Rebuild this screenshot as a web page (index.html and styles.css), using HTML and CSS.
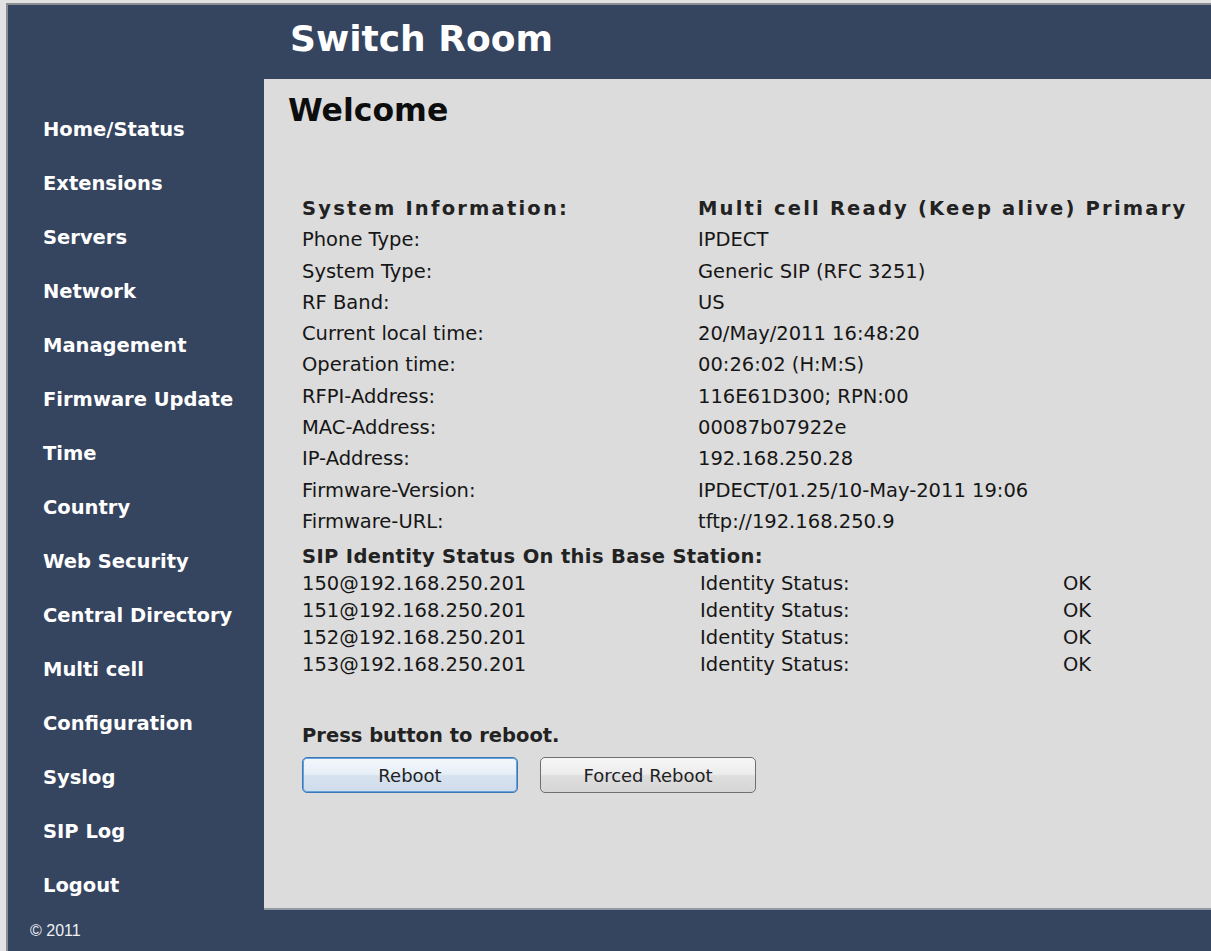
FILE: index.html
```html
<!DOCTYPE html>
<html lang="en">
<head>
<meta charset="utf-8">
<title>Switch Room</title>
<link rel="stylesheet" href="styles.css">
</head>
<body>
<div class="frame">
  <header class="header">
    <h1 class="site-title">Switch Room</h1>
  </header>

  <nav class="sidebar">
    <a class="nav-link" href="#">Home/Status</a>
    <a class="nav-link" href="#">Extensions</a>
    <a class="nav-link" href="#">Servers</a>
    <a class="nav-link" href="#">Network</a>
    <a class="nav-link" href="#">Management</a>
    <a class="nav-link" href="#">Firmware Update</a>
    <a class="nav-link" href="#">Time</a>
    <a class="nav-link" href="#">Country</a>
    <a class="nav-link" href="#">Web Security</a>
    <a class="nav-link" href="#">Central Directory</a>
    <a class="nav-link" href="#">Multi cell</a>
    <a class="nav-link" href="#">Configuration</a>
    <a class="nav-link" href="#">Syslog</a>
    <a class="nav-link" href="#">SIP Log</a>
    <a class="nav-link" href="#">Logout</a>
  </nav>

  <main class="panel">
    <h2 class="page-title">Welcome</h2>

    <div class="info">
      <div class="info-head">System Information:</div>
      <div class="info-head">Multi cell Ready (Keep alive) Primary</div>
      <div>Phone Type:</div><div>IPDECT</div>
      <div>System Type:</div><div>Generic SIP (RFC 3251)</div>
      <div>RF Band:</div><div>US</div>
      <div>Current local time:</div><div>20/May/2011 16:48:20</div>
      <div>Operation time:</div><div>00:26:02 (H:M:S)</div>
      <div>RFPI-Address:</div><div>116E61D300; RPN:00</div>
      <div>MAC-Address:</div><div>00087b07922e</div>
      <div>IP-Address:</div><div>192.168.250.28</div>
      <div>Firmware-Version:</div><div>IPDECT/01.25/10-May-2011 19:06</div>
      <div>Firmware-URL:</div><div>tftp://192.168.250.9</div>
    </div>

    <div class="sip-head">SIP Identity Status On this Base Station:</div>
    <div class="sip">
      <div>150@192.168.250.201</div><div class="sip-label">Identity Status:</div><div>OK</div>
      <div>151@192.168.250.201</div><div class="sip-label">Identity Status:</div><div>OK</div>
      <div>152@192.168.250.201</div><div class="sip-label">Identity Status:</div><div>OK</div>
      <div>153@192.168.250.201</div><div class="sip-label">Identity Status:</div><div>OK</div>
    </div>

    <div class="reboot-note">Press button to reboot.</div>
    <div class="actions">
      <button class="btn btn-focus" type="button">Reboot</button>
      <button class="btn" type="button">Forced Reboot</button>
    </div>
  </main>

  <footer class="footer">&copy; 2011</footer>
</div>
</body>
</html>
```

FILE: styles.css
```css
html, body {
  margin: 0;
  padding: 0;
}

body {
  background: #e2e2e2;
  font-family: "DejaVu Sans", Verdana, sans-serif;
  overflow: hidden;
}

/* page frame: navy shell with a thin grey edge on top and left */
.frame {
  margin: 3px 0 0 6px;
  height: 946px;
  border-top: 2px solid #8b8d92;
  border-left: 2px solid #8b8d92;
  background: #35445f;
  display: grid;
  grid-template-columns: 256px 1fr;
  grid-template-rows: 74px 831px 41px;
}

.header {
  grid-column: 2;
  grid-row: 1;
  display: flex;
  align-items: center;
  padding-left: 26px;
}

.site-title {
  margin: 0;
  color: #ffffff;
  font-size: 36px;
  font-weight: bold;
  line-height: 1;
  padding-bottom: 6px;
}

/* left menu */
.sidebar {
  grid-column: 1;
  grid-row: 2;
  display: flex;
  flex-direction: column;
  padding: 24px 0 0 35px;
}

.nav-link {
  color: #ffffff;
  text-decoration: none;
  font-weight: bold;
  font-size: 19.5px;
  line-height: 54px;
  white-space: nowrap;
}

/* main content */
.panel {
  grid-column: 2;
  grid-row: 2;
  background: #dcdcdc;
  border-bottom: 2px solid #929aa6;
  padding: 12px 0 0 24px;
  color: #161616;
  font-size: 19.5px;
}

.page-title {
  margin: 0;
  font-size: 31.5px;
  line-height: 38px;
  font-weight: bold;
  color: #0d0d0d;
}

.info {
  margin: 64px 0 0 14px;
  display: grid;
  grid-template-columns: 396px 1fr;
  line-height: 31.3px;
}

.info-head {
  font-weight: bold;
  letter-spacing: 2.2px;
  color: #222;
}

.sip-head {
  margin: 6px 0 0 14px;
  font-weight: bold;
  letter-spacing: 0.35px;
  line-height: 27px;
  color: #222;
}

.sip {
  margin-left: 14px;
  display: grid;
  grid-template-columns: 398px 363px 1fr;
  line-height: 27px;
}

.reboot-note {
  margin: 44px 0 0 14px;
  font-weight: bold;
  line-height: 27px;
  color: #222;
}

.actions {
  margin: 8px 0 0 14px;
  display: flex;
  gap: 22px;
}

.btn {
  width: 216px;
  height: 36px;
  border: 1px solid #6f6f6f;
  border-radius: 5px;
  background: linear-gradient(#f6f6f6 0%, #ececec 48%, #dedede 52%, #d6d6d6 100%);
  font-family: "DejaVu Sans", Verdana, sans-serif;
  font-size: 18px;
  color: #222;
  padding: 0;
}

.btn-focus {
  border: 1px solid #3b79b8;
  box-shadow: 0 0 0 1px #6aa0d8 inset;
  background: linear-gradient(#f4f8fc 0%, #e6eef7 48%, #d6e2ef 52%, #cfdceb 100%);
}

.footer {
  grid-column: 1 / 3;
  grid-row: 3;
  display: flex;
  align-items: center;
  padding-left: 22px;
  color: #eef0f4;
  font-family: "Liberation Sans", Arial, sans-serif;
  font-size: 16px;
}
```
